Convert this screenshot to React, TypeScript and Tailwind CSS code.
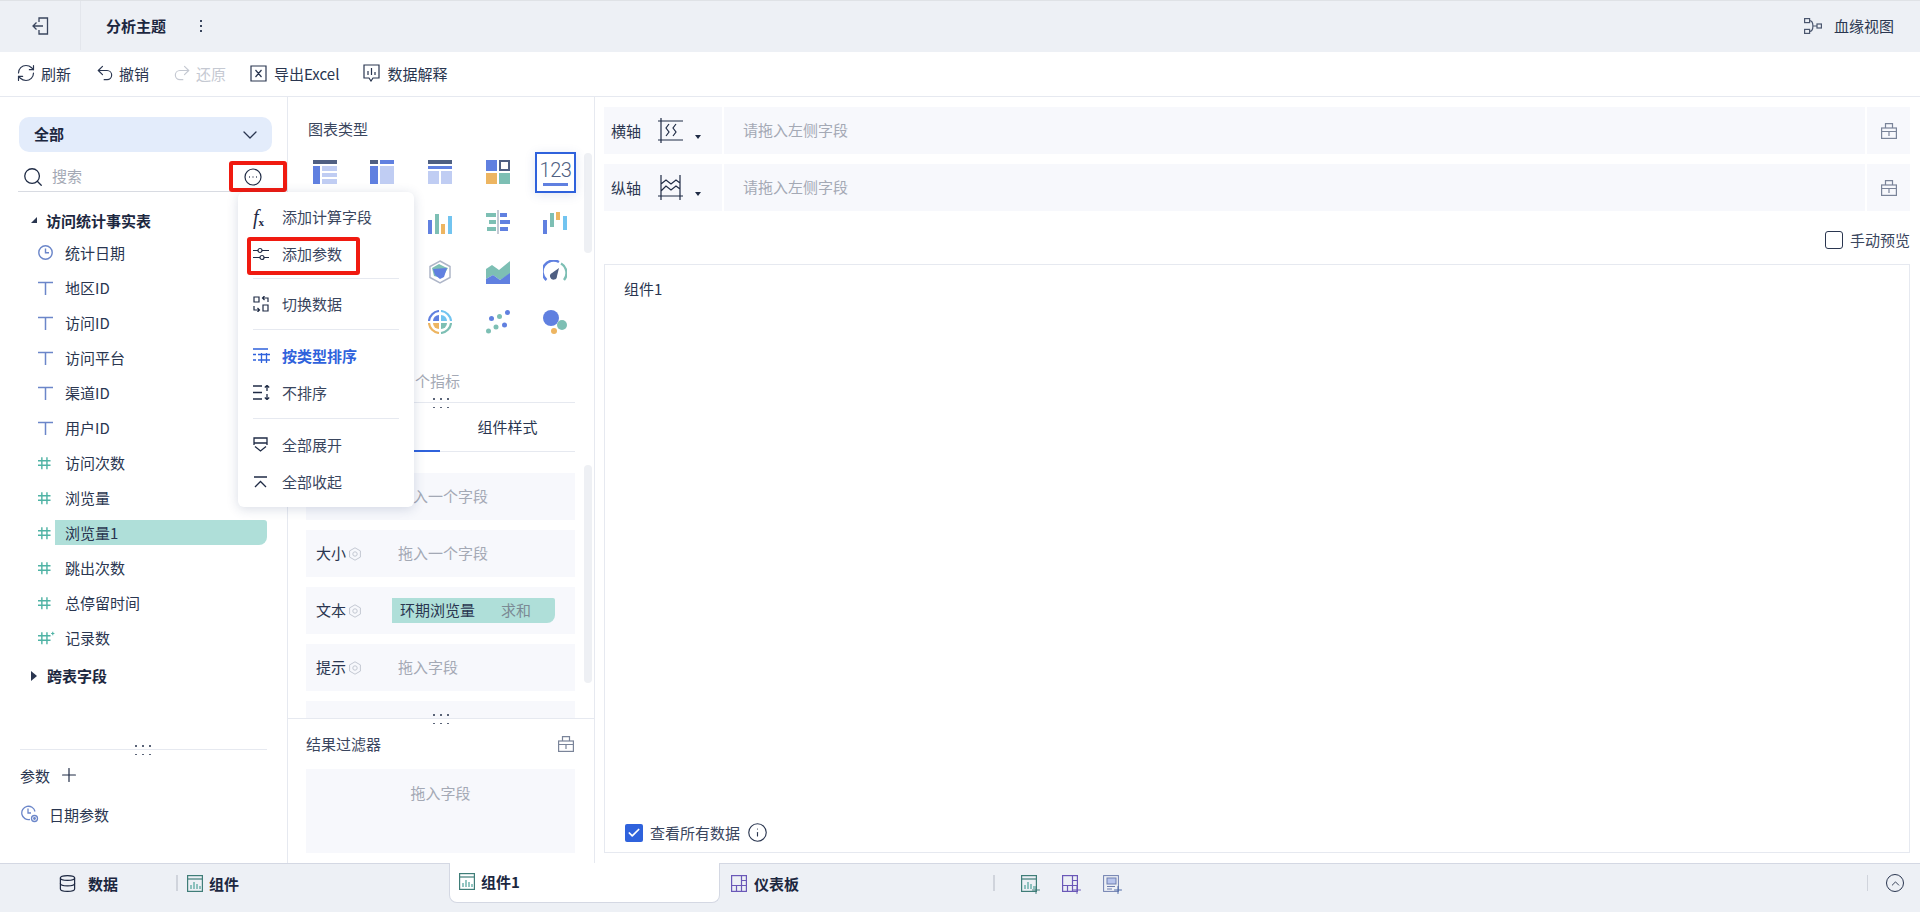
import { ChevronDown, Check, Plus, Search, Undo2, Redo2, RefreshCw, Database, Info, ChevronUp } from "lucide-react";
import type { ReactNode } from "react";

const DK = "#4f5f82";
const BL = "#6080e0";
const LB = "#c0cdf3";
const OR = "#edb561";
const TE = "#7dbfb4";
const SK = "#72c4f0";

const chartIcons: (ReactNode | null)[] = [
  <>
    <rect width="24" height="4" fill={DK} />
    <rect y="6" width="7" height="18" fill={BL} />
    <rect x="9" y="6" width="15" height="5" fill={LB} />
    <rect x="9" y="13" width="15" height="4" fill={LB} />
    <rect x="9" y="19" width="15" height="5" fill={LB} />
  </>,
  <>
    <rect width="8" height="4" fill={DK} />
    <rect x="10" width="14" height="4" fill={BL} />
    <rect y="6" width="8" height="18" fill={BL} />
    <rect x="10" y="6" width="14" height="18" fill={LB} />
  </>,
  <>
    <rect width="24" height="4" fill={DK} />
    <rect y="6" width="24" height="3" fill={BL} />
    <rect y="11" width="11" height="13" fill={LB} />
    <rect x="13" y="11" width="11" height="13" fill={LB} />
  </>,
  <>
    <rect width="11" height="11" fill={BL} />
    <rect x="14" y="1" width="9" height="9" fill="none" stroke={DK} strokeWidth="2" />
    <rect y="13" width="11" height="11" fill={OR} />
    <rect x="13" y="13" width="11" height="11" fill={TE} />
  </>,
  null,
  null,
  null,
  <>
    <rect y="10" width="4" height="14" fill={BL} />
    <rect x="7" y="4" width="4" height="20" fill={TE} />
    <rect x="13" y="14" width="4" height="10" fill={OR} />
    <rect x="20" y="6" width="4" height="18" fill={SK} />
  </>,
  <>
    <rect x="11" y="0" width="2" height="24" fill="#c4c9d4" />
    <rect x="0" y="3" width="10" height="4" fill={TE} />
    <rect x="14" y="3" width="7" height="4" fill={BL} />
    <rect x="3" y="10" width="7" height="4" fill={TE} />
    <rect x="14" y="10" width="10" height="4" fill={BL} />
    <rect x="1" y="17" width="9" height="4" fill={TE} />
    <rect x="14" y="17" width="8" height="4" fill={BL} />
  </>,
  <>
    <rect y="10" width="4" height="14" fill={BL} />
    <rect x="7" y="3" width="4" height="14" fill={TE} />
    <rect x="13" y="2" width="4" height="8" fill={OR} />
    <rect x="20" y="6" width="4" height="14" fill={SK} />
  </>,
  null,
  null,
  <>
    <path d="M12 1 L22 6.5 V17.5 L12 23 L2 17.5 V6.5 Z" fill="none" stroke="#aeb6c8" strokeWidth="1.5" />
    <path d="M11 4 L17 7 L20 8 L14 18 L6 16 L4 8 Z" fill={TE} />
    <path d="M5 9 L19 8 L16 17 L12 19 L7 15 Z" fill={BL} />
  </>,
  <>
    <path d="M0 9 L6 5 L13 10 L24 1 V14 L14 20 L7 15 L0 19 Z" fill={TE} />
    <path d="M0 19 L7 15 L14 20 L24 13 V24 H0 Z" fill={BL} />
  </>,
  <>
    <path d="M3.5 20 A11 11 0 0 1 16 2" fill="none" stroke={BL} strokeWidth="2.4" />
    <path d="M18 3.5 A11 11 0 0 1 21 20" fill="none" stroke={TE} strokeWidth="2.4" />
    <path d="M16 8 L9 13 A3.5 3.5 0 1 0 14 16 Z" fill={DK} />
  </>,
  null,
  null,
  <>
    <path d="M11 1 A11 11 0 0 0 1 11" fill="none" stroke={BL} strokeWidth="2.2" />
    <path d="M13 1 A11 11 0 0 1 23 11" fill="none" stroke={SK} strokeWidth="2.2" />
    <path d="M1 13 A11 11 0 0 0 11 23" fill="none" stroke={OR} strokeWidth="2.2" />
    <path d="M13 23 A11 11 0 0 0 23 13" fill="none" stroke={TE} strokeWidth="2.2" />
    <path d="M11 5 V11 H5 A6 6 0 0 1 11 5 Z" fill={BL} />
    <path d="M13 5 A6 6 0 0 1 19 11 H13 Z" fill={SK} />
    <path d="M5 13 H11 V19 A6 6 0 0 1 5 13 Z" fill={OR} />
    <path d="M13 13 H19 A6 6 0 0 1 13 19 Z" fill={TE} />
  </>,
  <>
    <circle cx="21.5" cy="2.5" r="2.5" fill={BL} />
    <circle cx="13.5" cy="6.5" r="2.5" fill={TE} />
    <circle cx="5.5" cy="8.5" r="2.5" fill={BL} />
    <circle cx="18.5" cy="15" r="2.5" fill={BL} />
    <circle cx="10" cy="17" r="2.5" fill={TE} />
    <circle cx="2.5" cy="21" r="2.5" fill={TE} />
  </>,
  <>
    <circle cx="8" cy="8" r="8" fill={BL} />
    <circle cx="19" cy="15" r="5" fill={TE} />
    <circle cx="11" cy="21" r="3" fill={OR} />
  </>,
];

const TIcon = () => (
  <svg width="15" height="14" viewBox="0 0 15 14" fill="none" stroke="#6b86c9" strokeWidth="1.5">
    <path d="M0 1.5 H15 M7.5 1.5 V14" />
  </svg>
);

const HashIcon = ({ star = false }: { star?: boolean }) => (
  <svg width="19" height="14" viewBox="0 0 19 14" fill="none" stroke="#4fb3a5" strokeWidth="1.6">
    <path d="M0 4.5 H14 M0 9.5 H14 M4.3 0.5 V14 M10 0.5 V14" />
    {star && <path d="M16.5 0 V4 M14.7 2 H18.3" stroke="#4fb3a5" strokeWidth="1.2" />}
  </svg>
);

const ClockIcon = () => (
  <svg width="15" height="15" viewBox="0 0 15 15" fill="none" stroke="#6b86c9" strokeWidth="1.4">
    <circle cx="7.5" cy="7.5" r="6.7" />
    <path d="M7.5 3.5 V7.8 H11" />
  </svg>
);

const fields = [
  { name: "统计日期", icon: <ClockIcon /> },
  { name: "地区ID", icon: <TIcon /> },
  { name: "访问ID", icon: <TIcon /> },
  { name: "访问平台", icon: <TIcon /> },
  { name: "渠道ID", icon: <TIcon /> },
  { name: "用户ID", icon: <TIcon /> },
  { name: "访问次数", icon: <HashIcon /> },
  { name: "浏览量", icon: <HashIcon /> },
  { name: "浏览量1", icon: <HashIcon />, active: true },
  { name: "跳出次数", icon: <HashIcon /> },
  { name: "总停留时间", icon: <HashIcon /> },
  { name: "记录数", icon: <HashIcon star /> },
];

const DragDots = ({ className }: { className: string }) => (
  <div className={`absolute grid grid-cols-3 gap-x-[5.5px] gap-y-[7px] ${className}`}>
    {[0, 1, 2, 3, 4, 5].map((i) => (
      <span key={i} className="h-[1.5px] w-[1.5px] bg-[#5a6478]" />
    ))}
  </div>
);

const Gear = () => (
  <svg width="14" height="14" viewBox="0 0 14 14" fill="none" stroke="#c3c8d2" strokeWidth="1" className="ml-[2px] mt-[2px]">
    <path d="M7 .8 L12.4 3.9 V10.1 L7 13.2 L1.6 10.1 V3.9 Z" />
    <circle cx="7" cy="7" r="2.2" />
  </svg>
);

const Bag = () => (
  <svg width="16" height="16" viewBox="0 0 16 16" fill="none" stroke="#7a8499" strokeWidth="1.2">
    <rect x="0.6" y="5" width="14.8" height="10.4" />
    <path d="M4.5 5 V0.7 H11.5 V5 M0.6 8.5 H15.4 M8 8.5 V13" />
  </svg>
);

const FieldRow = ({ label, hint }: { label?: string; hint: string }) => (
  <div className="flex h-[47px] shrink-0 items-center bg-[#f7f8fc] pb-[2px] pl-[10px]">
    <div className="flex w-[82px] items-center">
      {label && (
        <>
          <span>{label}</span>
          <Gear />
        </>
      )}
    </div>
    <span className="text-[#a4a9b5]">{hint}</span>
  </div>
);

const MenuItem = ({ icon, label, active = false }: { icon: ReactNode; label: string; active?: boolean }) => (
  <div className={`flex h-[37px] items-center pl-[15px] ${active ? "font-bold text-[#2f62dc]" : "text-[#3a465e]"}`}>
    <span className={`flex w-[29px] ${active ? "text-[#2f62dc]" : "text-[#1f2b45]"}`}>{icon}</span>
    {label}
  </div>
);

const AxisRow = ({ label, icon }: { label: string; icon: ReactNode }) => (
  <div className="flex h-[47px] gap-[2px]">
    <div className="flex w-[118px] items-center bg-[#f7f8fc] pl-[7px]">
      <span>{label}</span>
      <span className="ml-[17px] text-[#1f2b45]">{icon}</span>
      <span className="ml-[12px] mt-[12px] h-0 w-0 border-x-[3.5px] border-t-[4px] border-x-transparent border-t-[#1f2b45]" />
    </div>
    <div className="flex flex-1 items-center bg-[#f7f8fc] pb-[2px] pl-[19px] text-[#a4a9b5]">请拖入左侧字段</div>
    <div className="flex w-[43px] items-center justify-center bg-[#f7f8fc]">
      <Bag />
    </div>
  </div>
);

const TabIconChart = () => (
  <svg width="16" height="17" viewBox="0 0 16 17" fill="none" stroke="#3f7d78" strokeWidth="1.2">
    <rect x="0.6" y="0.6" width="14.8" height="15.8" />
    <path d="M0.6 4 H15.4" />
    <path d="M4 14 V10 M7 14 V7 M10 14 V9 M13 14 V11" stroke="#5aa8a0" strokeWidth="1.3" />
  </svg>
);

const TabIconDash = () => (
  <svg width="16" height="17" viewBox="0 0 16 17" fill="none" stroke="#6a58b8" strokeWidth="1.2">
    <rect x="0.6" y="0.6" width="14.8" height="15.8" />
    <path d="M0.6 10.5 H15.4 M10.5 0.6 V16.4 M5.5 10.5 V16.4 M10.5 5.5 H15.4" />
  </svg>
);

export default function App() {
  return (
    <div className="flex h-screen w-full flex-col overflow-hidden bg-white font-['Noto_Sans_CJK_SC','Noto_Sans',sans-serif] text-[15px] leading-none text-[#2a3650]">
      {/* top bar */}
      <div className="flex h-[52px] shrink-0 items-center border-t border-[#dfe2e6] bg-[#edf0f5] pb-[2px]">
        <div className="flex h-full w-[81px] items-center justify-center border-r border-[#e3e6ec] text-[#3a465e]">
          <svg width="17" height="18" viewBox="0 0 17 18" fill="none" stroke="currentColor" strokeWidth="1.3">
            <path d="M7 5 V1 H15.5 V17 H7 V13 M11 9 H1 M4.5 5.5 L1 9 L4.5 12.5" />
          </svg>
        </div>
        <span className="ml-[25px] font-bold text-[#1c2740]">分析主题</span>
        <span className="ml-[34px] flex flex-col gap-[3px]">
          <i className="h-[2px] w-[2px] bg-[#3a465e]" />
          <i className="h-[2px] w-[2px] bg-[#3a465e]" />
          <i className="h-[2px] w-[2px] bg-[#3a465e]" />
        </span>
        <div className="ml-auto mr-[26px] flex items-center gap-[12px]">
          <svg width="18" height="16" viewBox="0 0 18 16" fill="none" stroke="#4a566e" strokeWidth="1.2">
            <rect x="0.6" y="0.6" width="5" height="4" />
            <rect x="0.6" y="11.4" width="5" height="4" />
            <rect x="13" y="6" width="4.4" height="4" />
            <path d="M5.6 2.6 C10 2.6 10 13.4 5.6 13.4 M9.4 8 H13" />
          </svg>
          <span>血缘视图</span>
        </div>
      </div>

      {/* toolbar */}
      <div className="flex h-[45px] shrink-0 items-center border-b border-[#e6e9f0] pb-[2px] pl-[16px]">
        <RefreshCw size={20} strokeWidth={1.4} />
        <span className="ml-[5px]">刷新</span>
        <Undo2 size={20} strokeWidth={1.4} className="ml-[24px]" />
        <span className="ml-[4px]">撤销</span>
        <Redo2 size={20} strokeWidth={1.4} className="ml-[23px] text-[#c5c9d2]" />
        <span className="ml-[4px] text-[#c5c9d2]">还原</span>
        <svg width="17" height="17" viewBox="0 0 17 17" fill="none" stroke="#2a3650" strokeWidth="1.2" className="ml-[24px]">
          <path d="M4 1 H1 V16 H4 M13 1 H16 V16 H13 M1 1 H16 M1 16 H16 M5.5 5 L11.5 12 M11.5 5 L5.5 12" />
        </svg>
        <span className="ml-[7px]">导出Excel</span>
        <svg width="17" height="18" viewBox="0 0 17 18" fill="none" stroke="#2a3650" strokeWidth="1.2" className="ml-[24px]">
          <path d="M1 1 H16 V14 H10 L8 17 L6 14 H1 Z M5 11 V7 M8.5 11 V4 M12 11 V8" />
        </svg>
        <span className="ml-[7px]">数据解释</span>
      </div>

      {/* main */}
      <div className="relative flex min-h-0 flex-1">
        {/* field panel */}
        <div className="flex w-[288px] shrink-0 flex-col border-r border-[#e6e9f0]">
          <div className="mx-[19px] mt-[20px] flex h-[35px] w-[253px] shrink-0 items-center justify-between rounded-[10px] bg-[#e3ecfb] pl-[15px] pr-[10px]">
            <span className="mb-[2px] font-bold text-[#1c2740]">全部</span>
            <ChevronDown size={24} strokeWidth={1.3} />
          </div>
          <div className="relative mx-[18px] mt-[10px] flex h-[30px] w-[212px] shrink-0 items-center border-b border-[#d8dbe2] pl-[4px]">
            <Search size={22} strokeWidth={1.4} className="text-[#1f2b45]" />
            <span className="mb-[2px] ml-[8px] text-[#a4a9b5]">搜索</span>
          </div>
          <div className="min-h-0 flex-1 pt-[13px]">
            <div className="flex h-[30px] items-center pl-[31px] font-bold text-[#1c2740]">
              <span className="mr-[9px] h-0 w-0 border-b-[6px] border-l-[6px] border-b-[#2a3650] border-l-transparent" />
              访问统计事实表
            </div>
            {fields.map((f) => (
              <div key={f.name} className="flex h-[35px] items-center pl-[38px]">
                <span className="flex w-[17px] shrink-0">{f.icon}</span>
                {f.active ? (
                  <span className="flex h-[25px] w-[212px] items-center rounded-br-[8px] rounded-tr-[3px] bg-[#afdfd9] pl-[10px]">{f.name}</span>
                ) : (
                  <span className="pl-[10px]">{f.name}</span>
                )}
              </div>
            ))}
            <div className="mt-[3px] flex h-[35px] items-center pl-[31px] font-bold text-[#1c2740]">
              <span className="mr-[10px] h-0 w-0 border-y-[5px] border-l-[6px] border-y-transparent border-l-[#2a3650]" />
              跨表字段
            </div>
          </div>
          <div className="relative mx-[20px] h-[114px] w-[247px] shrink-0 border-t border-[#e6e9f0]">
            <DragDots className="left-[115px] top-[-5px]" />
            <div className="flex h-[51px] items-center pb-[1px]">
              参数
              <Plus size={22} strokeWidth={1.3} className="ml-[8px] text-[#1f2b45]" />
            </div>
            <div className="flex h-[28px] items-center pb-[2px]">
              <svg width="18" height="18" viewBox="0 0 18 18" fill="none" stroke="#6b86c9" strokeWidth="1.3" className="ml-[1px]">
                <path d="M9 14.5 A6.7 6.7 0 1 1 14 6.5 M7 3.5 V8 H10" />
                <circle cx="13.5" cy="13.5" r="3" />
                <circle cx="13.5" cy="13.5" r="0.8" fill="#6b86c9" />
              </svg>
              <span className="ml-[10px]">日期参数</span>
            </div>
          </div>
        </div>

        {/* config panel */}
        <div className="relative flex w-[307px] shrink-0 flex-col border-r border-[#e6e9f0]">
          <div className="h-[305px] shrink-0">
            <div className="pl-[20px] pt-[24px] text-[#3a465e]">图表类型</div>
            <div className="ml-[8px] mt-[11px] grid w-[288px] grid-cols-5">
              {chartIcons.map((icon, i) => (
                <div key={i} className="flex h-[50px] items-center justify-center">
                  {icon && (
                    <svg width="24" height="24" viewBox="0 0 24 24">
                      {icon}
                    </svg>
                  )}
                </div>
              ))}
            </div>
            <div className="pl-[127px] pt-[26px] text-[#a4a9b5]">个指标</div>
          </div>
          <div className="relative flex h-[51px] shrink-0 items-start pl-[18px]">
            <div className="absolute left-[18px] top-0 h-px w-[269px] bg-[#e6e9f0]" />
            <DragDots className="left-[145px] top-[-4px]" />
            <div className="flex h-[50px] w-[134px] border-b-2 border-[#2f62dc]" />
            <div className="flex h-[50px] w-[135px] items-center justify-center border-b border-[#e6e9f0]">组件样式</div>
          </div>
          <div className="flex min-h-0 flex-1 flex-col gap-[10px] overflow-hidden pl-[18px] pr-[19px] pt-[20px]">
            <FieldRow hint="拖入一个字段" />
            <FieldRow label="大小" hint="拖入一个字段" />
            <div className="flex h-[47px] shrink-0 items-center bg-[#f7f8fc] pl-[10px]">
              <div className="mb-[2px] flex w-[76px] items-center">
                <span>文本</span>
                <Gear />
              </div>
              <div className="flex h-[25px] w-[163px] items-center justify-between rounded-br-[8px] rounded-tr-[2px] bg-[#afdfd9] pb-[2px] pl-[8px] pr-[24px]">
                <span>环期浏览量</span>
                <span className="text-[#7b8a94]">求和</span>
              </div>
            </div>
            <FieldRow label="提示" hint="拖入字段" />
            <div className="h-[47px] shrink-0 bg-[#f7f8fc]" />
          </div>
          <div className="relative h-[145px] shrink-0 border-t border-[#e6e9f0]">
            <DragDots className="left-[145px] top-[-5px]" />
            <div className="flex h-[50px] items-center justify-between pl-[18px] pr-[20px] text-[#3a465e]">
              <span className="mb-[2px]">结果过滤器</span>
              <Bag />
            </div>
            <div className="ml-[18px] flex h-[84px] w-[269px] justify-center bg-[#f7f8fc] pt-[16px] text-[#a4a9b5]">拖入字段</div>
          </div>
          <div className="absolute left-[296px] top-[56px] h-[100px] w-[8px] rounded-full bg-[#eef0f4]" />
          <div className="absolute left-[296px] top-[368px] h-[218px] w-[8px] rounded-full bg-[#eef0f4]" />
        </div>

        {/* chart panel */}
        <div className="flex min-w-0 flex-1 flex-col pl-[9px] pr-[10px] pt-[10px]">
          <div className="flex flex-col gap-[10px]">
            <AxisRow
              label="横轴"
              icon={
                <svg width="25" height="25" viewBox="0 0 25 25" fill="none" stroke="currentColor" strokeWidth="1.2" className="block">
                  <path d="M0 3 H25 M0 22 H25 M3 0 V25 M11 6 L8 10 L11 14 L8 18 M18 6 L15 10 L18 14 L15 18" />
                </svg>
              }
            />
            <AxisRow
              label="纵轴"
              icon={
                <svg width="25" height="25" viewBox="0 0 25 25" fill="none" stroke="currentColor" strokeWidth="1.2" className="block">
                  <path d="M0 21 H25 M3 0 V25 M22 0 V25 M3 9 L8 5 L13 9 L18 5 L22 8 M3 16 L8 11 L13 15 L18 11 L22 14" />
                </svg>
              }
            />
          </div>
          <div className="flex h-[53px] shrink-0 items-center justify-end pt-[5px]">
            <span className="mr-[7px] h-[18px] w-[18px] rounded-[3px] border border-[#2a3650]" />
            <span className="mb-[2px] text-[#3a465e]">手动预览</span>
          </div>
          <div className="mb-[10px] flex min-h-0 flex-1 flex-col justify-between border border-[#e6e9f0] pb-[9px] pl-[19px] pt-[16px]">
            <span>组件1</span>
            <div className="flex items-center">
              <span className="ml-[1px] flex h-[18px] w-[18px] items-center justify-center rounded-[2px] bg-[#2f62dc]">
                <Check size={14} strokeWidth={3} className="text-white" />
              </span>
              <span className="ml-[7px] text-[#3a465e]">查看所有数据</span>
              <Info size={21} strokeWidth={1.3} className="ml-[7px] text-[#2a3650]" />
            </div>
          </div>
        </div>

        {/* red highlight over the more button */}
        <div className="absolute left-[229px] top-[64px] flex h-[31px] w-[58px] items-center justify-center rounded-[3px] border-[4px] border-[#f01a10] bg-white pr-[10px]">
          <svg width="18" height="18" viewBox="0 0 18 18" fill="none" stroke="#1f2b45" strokeWidth="1.2">
            <circle cx="9" cy="9" r="8" />
            <path d="M5.2 9 H6 M8.6 9 H9.4 M12 9 H12.8" strokeWidth="1.5" />
          </svg>
        </div>

        {/* selected chart type */}
        <div className="absolute left-[535px] top-[55px] flex h-[41px] w-[41px] flex-col items-center justify-center border-[2.5px] border-[#2f62dc] bg-white shadow-[0_2px_10px_rgba(60,90,160,0.15)]">
          <span className="font-['Roboto',sans-serif] text-[20px] font-light tracking-[-0.5px] text-[#4f5f82]">123</span>
          <span className="mt-[3px] h-[3px] w-[25px] bg-[#6080e0]" />
        </div>

        {/* more menu */}
        <div className="absolute left-[238px] top-[95px] w-[176px] rounded-[6px] bg-white pb-[7px] pt-[6px] shadow-[0_2px_12px_rgba(40,60,110,0.18)]">
          <MenuItem
            label="添加计算字段"
            icon={<span className="font-['Liberation_Serif',serif] text-[20px] italic">f<sub className="text-[11px] not-italic font-bold">x</sub></span>}
          />
          <MenuItem
            label="添加参数"
            icon={
              <svg width="16" height="14" viewBox="0 0 16 14" fill="none" stroke="currentColor" strokeWidth="1.2">
                <path d="M0 3.5 H5 M9 3.5 H16 M0 10.5 H7 M11 10.5 H16" />
                <circle cx="7" cy="3.5" r="2" />
                <circle cx="9" cy="10.5" r="2" />
              </svg>
            }
          />
          <div className="mx-[15px] my-[6px] h-px bg-[#e6e9f0]" />
          <MenuItem
            label="切换数据"
            icon={
              <svg width="16" height="16" viewBox="0 0 16 16" fill="none" stroke="currentColor" strokeWidth="1.2">
                <path d="M6 1 H1 V6 H6 Z M10 9 H15 V15 H10 Z M1 10 V14 H6 M4.5 12 L6.5 14 L4.5 16 M15 6 V2 H10 M11.5 0 L9.5 2 L11.5 4" />
              </svg>
            }
          />
          <div className="mx-[15px] my-[7px] h-px bg-[#e6e9f0]" />
          <MenuItem
            active
            label="按类型排序"
            icon={
              <svg width="17" height="15" viewBox="0 0 17 15" fill="none" stroke="currentColor" strokeWidth="1.3">
                <path d="M0 1 H15 M0 6.5 H3 M5 6.5 H17 M0 12 H3 M5 12 H17 M8.5 5 V15 M13.5 5 V15" />
              </svg>
            }
          />
          <MenuItem
            label="不排序"
            icon={
              <svg width="17" height="15" viewBox="0 0 17 15" fill="none" stroke="currentColor" strokeWidth="1.3">
                <path d="M0 1 H9 M0 7.5 H9 M0 14 H9 M14 0 V6 M11.8 2.4 L14 0.4 L16.2 2.4 M14 9 V15 M11.8 12.6 L14 14.6 L16.2 12.6" />
              </svg>
            }
          />
          <div className="mx-[15px] my-[7px] h-px bg-[#e6e9f0]" />
          <MenuItem
            label="全部展开"
            icon={
              <svg width="15" height="15" viewBox="0 0 15 15" fill="none" stroke="currentColor" strokeWidth="1.3">
                <path d="M1 8 V1 H14 V8 M1 6 H14 M2 9.5 L7.5 14 L13 9.5" />
              </svg>
            }
          />
          <MenuItem
            label="全部收起"
            icon={
              <svg width="15" height="12" viewBox="0 0 15 12" fill="none" stroke="currentColor" strokeWidth="1.3">
                <path d="M1 1 H14 M2 11 L7.5 5.5 L13 11" />
              </svg>
            }
          />
        </div>

        {/* red highlight over 添加参数 */}
        <div className="absolute left-[247px] top-[140px] h-[38px] w-[113px] rounded-[3px] border-[4px] border-[#f01a10]" />
      </div>

      {/* bottom bar */}
      <div className="flex h-[49px] shrink-0 items-start border-t border-[#d4d8e3] bg-[#edf0f5] font-bold text-[#1c2740]">
        <div className="flex h-[38px] w-[449px] shrink-0 items-center pl-[58px]">
          <Database size={19} strokeWidth={1.5} />
          <span className="ml-[11px]">数据</span>
          <span className="ml-[58px] h-[16px] w-[2px] bg-[#d0d4dc]" />
          <span className="ml-[9px]"><TabIconChart /></span>
          <span className="ml-[6px]">组件</span>
        </div>
        <div className="-mt-px flex h-[40px] w-[271px] shrink-0 items-center rounded-b-[8px] border-x border-b border-[#d4d8e3] bg-white pb-[2px] pl-[9px]">
          <TabIconChart />
          <span className="ml-[6px]">组件1</span>
        </div>
        <div className="flex h-[38px] items-center pl-[11px]">
          <TabIconDash />
          <span className="ml-[7px]">仪表板</span>
          <span className="ml-[194px] h-[16px] w-[1.5px] bg-[#d0d4dc]" />
          <span className="relative ml-[26px]">
            <TabIconChart />
            <Plus size={12} strokeWidth={2} className="absolute -bottom-[4px] -right-[5px] text-[#3f7d78]" />
          </span>
          <span className="relative ml-[25px]">
            <TabIconDash />
            <Plus size={12} strokeWidth={2} className="absolute -bottom-[4px] -right-[5px] text-[#6a58b8]" />
          </span>
          <span className="relative ml-[25px]">
            <svg width="16" height="17" viewBox="0 0 16 17" fill="#b7c4ec" stroke="#6f7fb0" strokeWidth="1">
              <rect x="0.6" y="0.6" width="14.8" height="15.8" fill="none" />
              <rect x="4" y="3" width="9" height="6" />
              <path d="M4 11.5 H12 M4 14 H9" fill="none" />
            </svg>
            <Plus size={12} strokeWidth={2} className="absolute -bottom-[4px] -right-[5px] text-[#4f6aa8]" />
          </span>
        </div>
        <div className="ml-auto mr-[16px] flex h-[38px] items-center gap-[18px]">
          <span className="h-[16px] w-[1.5px] bg-[#d0d4dc]" />
          <span className="flex h-[18px] w-[18px] items-center justify-center rounded-full border border-[#2a3650]">
            <ChevronUp size={13} strokeWidth={1.6} />
          </span>
        </div>
      </div>
    </div>
  );
}
